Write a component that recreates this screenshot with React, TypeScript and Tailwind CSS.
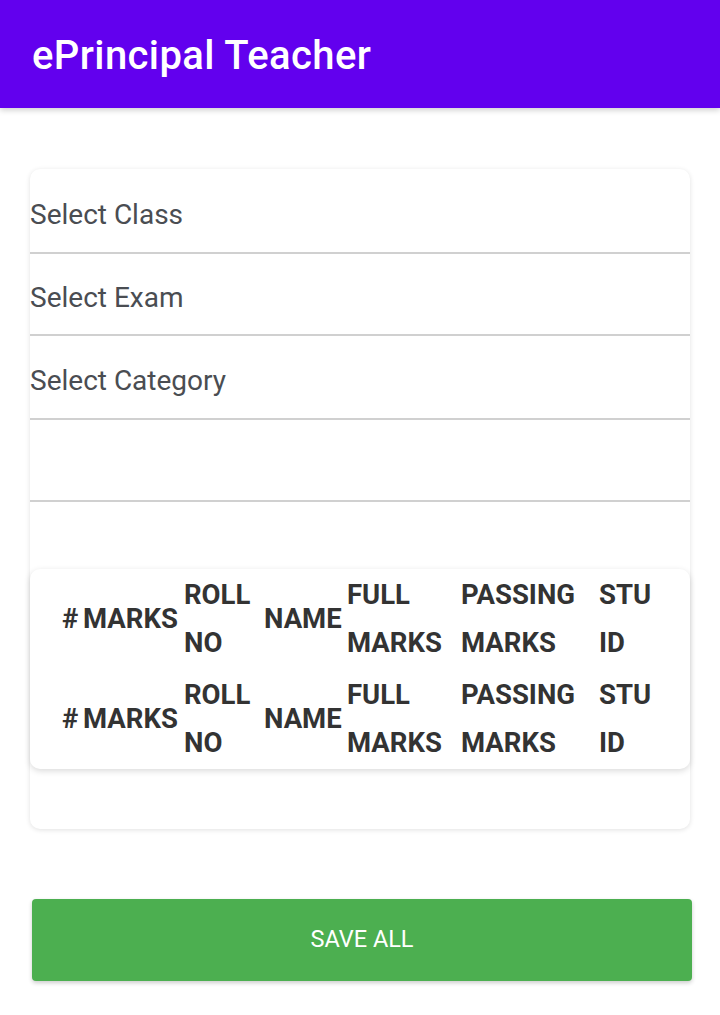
import React from "react";

const selects = [
  { label: "Select Class", h: "h-[85px]" },
  { label: "Select Exam", h: "h-[82px]" },
  { label: "Select Category", h: "h-[84px]" },
  { label: "", h: "h-[82px]" },
];

const columns = [
  { label: ["#"], w: "w-[21px]" },
  { label: ["MARKS"], w: "w-[101px]" },
  { label: ["ROLL", "NO"], w: "w-[80px]" },
  { label: ["NAME"], w: "w-[83px]" },
  { label: ["FULL", "MARKS"], w: "w-[114px]" },
  { label: ["PASSING", "MARKS"], w: "w-[138px]" },
  { label: ["STU", "ID"], w: "w-[60px]" },
];

const HeaderRow = () => (
  <div className="flex items-center h-[100px] pl-[32px]">
    {columns.map((c, i) => (
      <div key={i} className={`${c.w} shrink-0 flex flex-col justify-center`}>
        {c.label.map((l) => (
          <span key={l} className="leading-[48px]">
            {l}
          </span>
        ))}
      </div>
    ))}
  </div>
);

export default function App() {
  return (
    <div className="min-h-[1015px] bg-white font-['Roboto',sans-serif]">
      <header className="h-[108px] bg-[#6200ee] flex items-center px-[32px] shadow-[0_2px_6px_rgba(0,0,0,0.2)]">
        <h1 className="text-white text-[40px] font-medium tracking-[0.4px] pt-[3px]">ePrincipal Teacher</h1>
      </header>

      <div className="px-[30px] pt-[61px]">
        <div className="rounded-[10px] bg-white shadow-[0_1px_5px_rgba(0,0,0,0.12)] h-[660px]">
          {selects.map((s, i) => (
            <div
              key={i}
              className={`${s.h} flex items-center pt-[8px] border-b-2 border-[#d0d0d0] text-[28px] text-[#4a4d52]`}
            >
              {s.label}
            </div>
          ))}
          <div className="h-[69px]" />
          <div className="rounded-[10px] bg-white shadow-[0_2px_6px_rgba(0,0,0,0.15)] h-[200px] text-[27.5px] font-bold text-[#333]">
            <div className="-mt-[2px]">
              <HeaderRow />
              <HeaderRow />
            </div>
          </div>
        </div>

        <button className="mt-[70px] ml-[2px] w-[660px] h-[82px] rounded-[4px] bg-[#4caf50] text-white text-[23.5px] shadow-[0_2px_4px_rgba(0,0,0,0.2)]">
          SAVE ALL
        </button>
      </div>
    </div>
  );
}
